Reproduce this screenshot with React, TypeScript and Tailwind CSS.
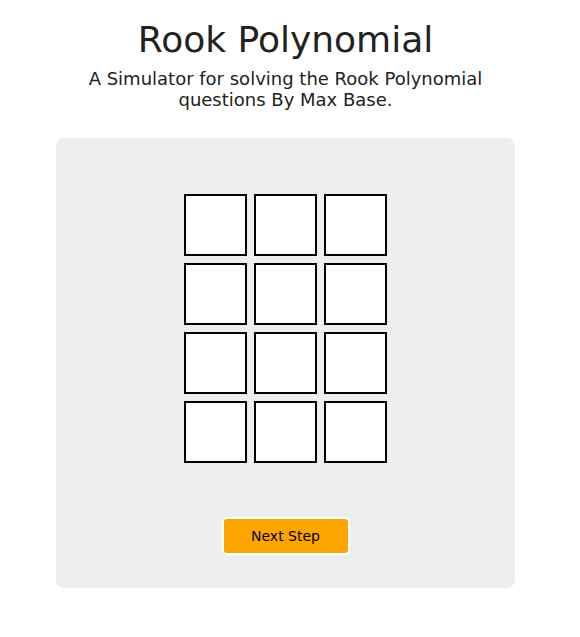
const ROWS = 4;
const COLS = 3;

function Board() {
  const cells = Array.from({ length: ROWS * COLS }, (_, i) => i);
  return (
    <div className="grid grid-cols-[repeat(3,63px)] gap-[7px]">
      {cells.map((i) => (
        <div key={i} className="h-[62px] w-[63px] border-2 border-black bg-white" />
      ))}
    </div>
  );
}

export default function App() {
  return (
    <div
      className="w-[571px] bg-white text-[#222]"
      style={{ fontFamily: '"DejaVu Sans", sans-serif' }}
    >
      <header className="flex flex-col items-center pt-[19px] text-center">
        <h1 className="text-[36px] leading-[42px]">Rook Polynomial</h1>
        <p className="mt-[7px] w-[420px] text-[18px] leading-[21px]">
          A Simulator for solving the Rook Polynomial questions By Max Base.
        </p>
      </header>

      <main className="mx-auto mt-[28px] flex h-[450px] w-[459px] flex-col items-center rounded-lg bg-[#eeeeee] pt-[56px]">
        <Board />
        <button className="mt-[54px] h-[38px] w-[128px] rounded-[5px] border-2 border-white bg-[#ffa500] text-[14px] text-black">
          Next Step
        </button>
      </main>
    </div>
  );
}
